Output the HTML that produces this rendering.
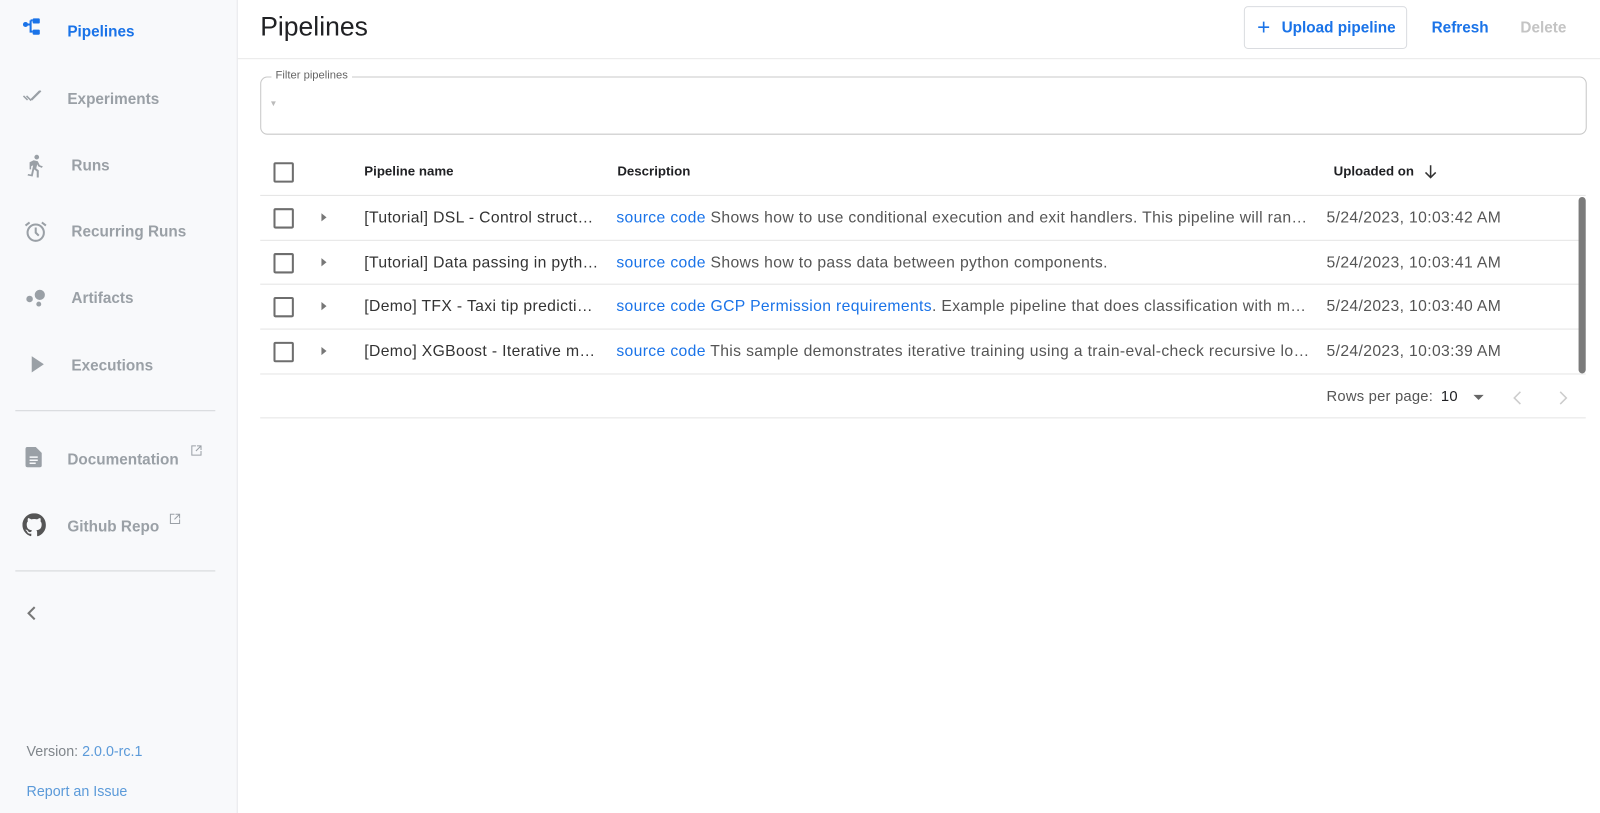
<!DOCTYPE html>
<html><head><style>
*{box-sizing:border-box;margin:0;padding:0}
html,body{width:1600px;height:813px;overflow:hidden}
body{font-family:"Liberation Sans",Arial,sans-serif;background:#fff;position:relative}
#w{position:absolute;left:0;top:0;width:1568px;height:797px;transform:scale(1.020408);transform-origin:0 0}
.side{position:absolute;left:0;top:0;width:233px;height:797px;background:#f8f9fb;border-right:1px solid #e6e8eb}
.nav{position:absolute;font-size:15px;font-weight:bold;color:#9aa0a6}
.ico{position:absolute}
.hr{position:absolute;left:15px;width:196px;height:1px;background:#d4d6d9}
.a{position:absolute;font-size:14px}
.t{position:absolute;font-size:15.4px;letter-spacing:0.35px;color:#333;white-space:nowrap}
.h{position:absolute;font-size:13px;font-weight:bold;color:#202124;white-space:nowrap}
.cb{position:absolute;left:268px;width:20px;height:20px;border:2px solid #6e6e6e;border-radius:2px}
.arr{position:absolute;left:315px;width:0;height:0;border-left:5px solid #777;border-top:4.5px solid transparent;border-bottom:4.5px solid transparent}
.line{position:absolute;left:255px;width:1299px;height:1px;background:#e4e4e4}
.lk{color:#1a73e8}
</style></head><body><div id="w">
<div class="side">
<svg class="ico" style="left:22px;top:17px" width="20" height="20" viewBox="0 0 20 20" fill="#1a73e8"><circle cx="3" cy="7" r="2.5"/><rect x="10" y="1" width="7" height="5" rx="1"/><rect x="10" y="12" width="7" height="5" rx="1"/><path d="M3 7h5M8 3v11h2M8 3h2" stroke="#1a73e8" stroke-width="2" fill="none"/></svg>
<div class="nav" style="left:66px;top:23px;color:#1a73e8">Pipelines</div>
<svg class="ico" style="left:22px;top:88px" width="22" height="14" viewBox="0 0 22 14" stroke="#9aa0a6" stroke-width="1.5" fill="none"><path d="M1 6l4 4 M4 6l4 4l9-9 M9 10l9-9"/></svg>
<div class="nav" style="left:66px;top:89px">Experiments</div>
<svg class="ico" style="left:24px;top:151px" width="20" height="24" viewBox="0 0 20 24" fill="#9aa0a6"><circle cx="12" cy="3" r="2.3"/><path d="M9 6l4 1 2 4 3 1-1 1.5-3.5-1.5-1-2-1 4 2.5 2v7h-2v-6l-2.5-2-1.5 7-5-1 .5-1.5 3 .5 2-9-2 1v3H5V8z"/></svg>
<div class="nav" style="left:70px;top:154px">Runs</div>
<svg class="ico" style="left:23px;top:215px" width="24" height="24" viewBox="0 0 24 24" fill="none" stroke="#9aa0a6" stroke-width="2"><circle cx="12" cy="13" r="8"/><path d="M12 8v5l3 3M2 6l4-3M22 6l-4-3"/></svg>
<div class="nav" style="left:70px;top:219px">Recurring Runs</div>
<svg class="ico" style="left:25px;top:282px" width="22" height="22" viewBox="0 0 22 22" fill="#9aa0a6"><circle cx="14" cy="7" r="5"/><circle cx="4" cy="11" r="3.2"/><circle cx="13" cy="16" r="2.4"/></svg>
<div class="nav" style="left:70px;top:284px">Artifacts</div>
<svg class="ico" style="left:31px;top:349px" width="12" height="16" viewBox="0 0 12 16" fill="#9aa0a6"><path d="M0 0l12 8-12 8z"/></svg>
<div class="nav" style="left:70px;top:350px">Executions</div>
<div class="hr" style="top:402px"></div>
<svg class="ico" style="left:25px;top:438px" width="16" height="20" viewBox="0 0 16 20" fill="#9aa0a6"><path d="M2 0h8l6 6v12a2 2 0 0 1-2 2H2a2 2 0 0 1-2-2V2a2 2 0 0 1 2-2z"/><path d="M4 10h8M4 13h8M4 16h6" stroke="#f8f9fb" stroke-width="1.5"/></svg>
<div class="nav" style="left:66px;top:442px">Documentation</div>
<svg class="ico" style="left:187px;top:436px" width="11" height="11" viewBox="0 0 11 11" fill="none" stroke="#9aa0a6" stroke-width="1"><path d="M5 1H1v9h9V6M6 1h4v4M10 1L5 6"/></svg>
<svg class="ico" style="left:22px;top:503px" width="23" height="23" viewBox="0 0 16 16" fill="#555"><path d="M8 0C3.58 0 0 3.580 0 8c0 3.54 2.29 6.53 5.47 7.59.4.07.55-.17.55-.38v-1.33c-2.230.48-2.7-1.07-2.7-1.07-.36-.92-.89-1.17-.89-1.17-.73-.5.05-.49.05-.49.8.06 1.23.83 1.23.83.72 1.23 1.88.87 2.33.66.07-.52.28-.87.51-1.07-1.78-.2-3.65-.89-3.65-3.950 0-.87.31-1.59.82-2.15-.08-.2-.36-1.02.08-2.12 0 0 .67-.21 2.2.82a7.6 7.6 0 0 1 4 0c1.53-1.04 2.2-.82 2.2-.82.44 1.1.16 1.920.08 2.12.51.56.82 1.27.82 2.15 0 3.07-1.87 3.75-3.65 3.95.29.25.54.73.54 1.48v2.2c0 .21.15.46.55.38A8.01 8.01 0 0 0 16 8c0-4.42-3.58-8-8-8z"/></svg>
<div class="nav" style="left:66px;top:508px">Github Repo</div>
<svg class="ico" style="left:166px;top:503px" width="11" height="11" viewBox="0 0 11 11" fill="none" stroke="#9aa0a6" stroke-width="1"><path d="M5 1H1v9h9V6M6 1h4v4M10 1L5 6"/></svg>
<div class="hr" style="top:559px"></div>
<svg class="ico" style="left:25px;top:594px" width="12" height="14" viewBox="0 0 12 14" fill="none" stroke="#777" stroke-width="2"><path d="M9 1L3 7l6 6"/></svg>
<div class="a" style="left:26px;top:728px;color:#80868b">Version: <span style="color:#5b9ad9">2.0.0-rc.1</span></div>
<div class="a" style="left:26px;top:767px;color:#5b9ad9">Report an Issue</div>
</div>

<div style="position:absolute;left:255px;top:11px;font-size:26px;color:#202124">Pipelines</div>
<div style="position:absolute;left:1219px;top:6px;width:160px;height:42px;border:1px solid #dadce0;border-radius:4px"></div>
<div style="position:absolute;left:1232px;top:16px;font-size:22px;color:#1a73e8;line-height:22px">+</div>
<div style="position:absolute;left:1256px;top:19px;font-size:15px;font-weight:bold;color:#1a73e8">Upload pipeline</div>
<div style="position:absolute;left:1403px;top:19px;font-size:15px;font-weight:bold;color:#1a73e8">Refresh</div>
<div style="position:absolute;left:1490px;top:19px;font-size:15px;font-weight:bold;color:#c4c4c4">Delete</div>
<div style="position:absolute;left:233px;top:57px;width:1367px;height:1px;background:#e8e8e8"></div>

<div style="position:absolute;left:255px;top:75px;width:1300px;height:57px;border:1px solid #c8c8c8;border-radius:7px"></div>
<div style="position:absolute;left:266px;top:68px;padding:0 4px;background:#fff;font-size:11px;color:#666">Filter pipelines</div>
<div style="position:absolute;left:264px;top:97px;font-size:8px;color:#bbb">▼</div>

<div class="cb" style="top:159px"></div>
<div class="h" style="left:357px;top:160px">Pipeline name</div>
<div class="h" style="left:605px;top:160px">Description</div>
<div class="h" style="left:1307px;top:160px">Uploaded on</div>
<svg class="ico" style="left:1396px;top:161px" width="12" height="14" viewBox="0 0 12 14" fill="none" stroke="#333" stroke-width="1.5"><path d="M6 1v12M1 8l5 5 5-5"/></svg>
<div class="line" style="top:191px"></div>

<div class="cb" style="top:204px"></div><div class="arr" style="top:209px"></div>
<div class="t" style="left:357px;top:205px">[Tutorial] DSL - Control struct…</div>
<div class="t" style="left:604px;top:205px;color:#555"><span class="lk">source code</span> Shows how to use conditional execution and exit handlers. This pipeline will ran…</div>
<div class="t" style="left:1300px;top:205px;color:#555">5/24/2023, 10:03:42 AM</div>
<div class="line" style="top:235px"></div>

<div class="cb" style="top:248px"></div><div class="arr" style="top:253px"></div>
<div class="t" style="left:357px;top:249px">[Tutorial] Data passing in pyth…</div>
<div class="t" style="left:604px;top:249px;color:#555"><span class="lk">source code</span> Shows how to pass data between python components.</div>
<div class="t" style="left:1300px;top:249px;color:#555">5/24/2023, 10:03:41 AM</div>
<div class="line" style="top:278px"></div>

<div class="cb" style="top:291px"></div><div class="arr" style="top:296px"></div>
<div class="t" style="left:357px;top:292px">[Demo] TFX - Taxi tip predicti…</div>
<div class="t" style="left:604px;top:292px;color:#555"><span class="lk">source code GCP Permission requirements</span>. Example pipeline that does classification with m…</div>
<div class="t" style="left:1300px;top:292px;color:#555">5/24/2023, 10:03:40 AM</div>
<div class="line" style="top:322px"></div>

<div class="cb" style="top:335px"></div><div class="arr" style="top:340px"></div>
<div class="t" style="left:357px;top:336px">[Demo] XGBoost - Iterative m…</div>
<div class="t" style="left:604px;top:336px;color:#555"><span class="lk">source code</span> This sample demonstrates iterative training using a train-eval-check recursive lo…</div>
<div class="t" style="left:1300px;top:336px;color:#555">5/24/2023, 10:03:39 AM</div>
<div class="line" style="top:366px"></div>

<div style="position:absolute;left:1547px;top:193px;width:7px;height:173px;background:#7b7b7b;border-radius:4px"></div>

<div class="t" style="left:1300px;top:381px;font-size:14.5px;letter-spacing:0.2px;color:#555">Rows per page:</div>
<div class="t" style="left:1412px;top:381px;font-size:14.5px;color:#202124">10</div>
<div style="position:absolute;left:1444px;top:387px;border-top:5px solid #666;border-left:5px solid transparent;border-right:5px solid transparent"></div>
<svg class="ico" style="left:1482px;top:383px" width="10" height="14" viewBox="0 0 10 14" fill="none" stroke="#ccc" stroke-width="1.5"><path d="M8 1L2 7l6 6"/></svg>
<svg class="ico" style="left:1527px;top:383px" width="10" height="14" viewBox="0 0 10 14" fill="none" stroke="#ccc" stroke-width="1.5"><path d="M2 1l6 6-6 6"/></svg>
<div class="line" style="top:409px"></div>
</div></body></html>
